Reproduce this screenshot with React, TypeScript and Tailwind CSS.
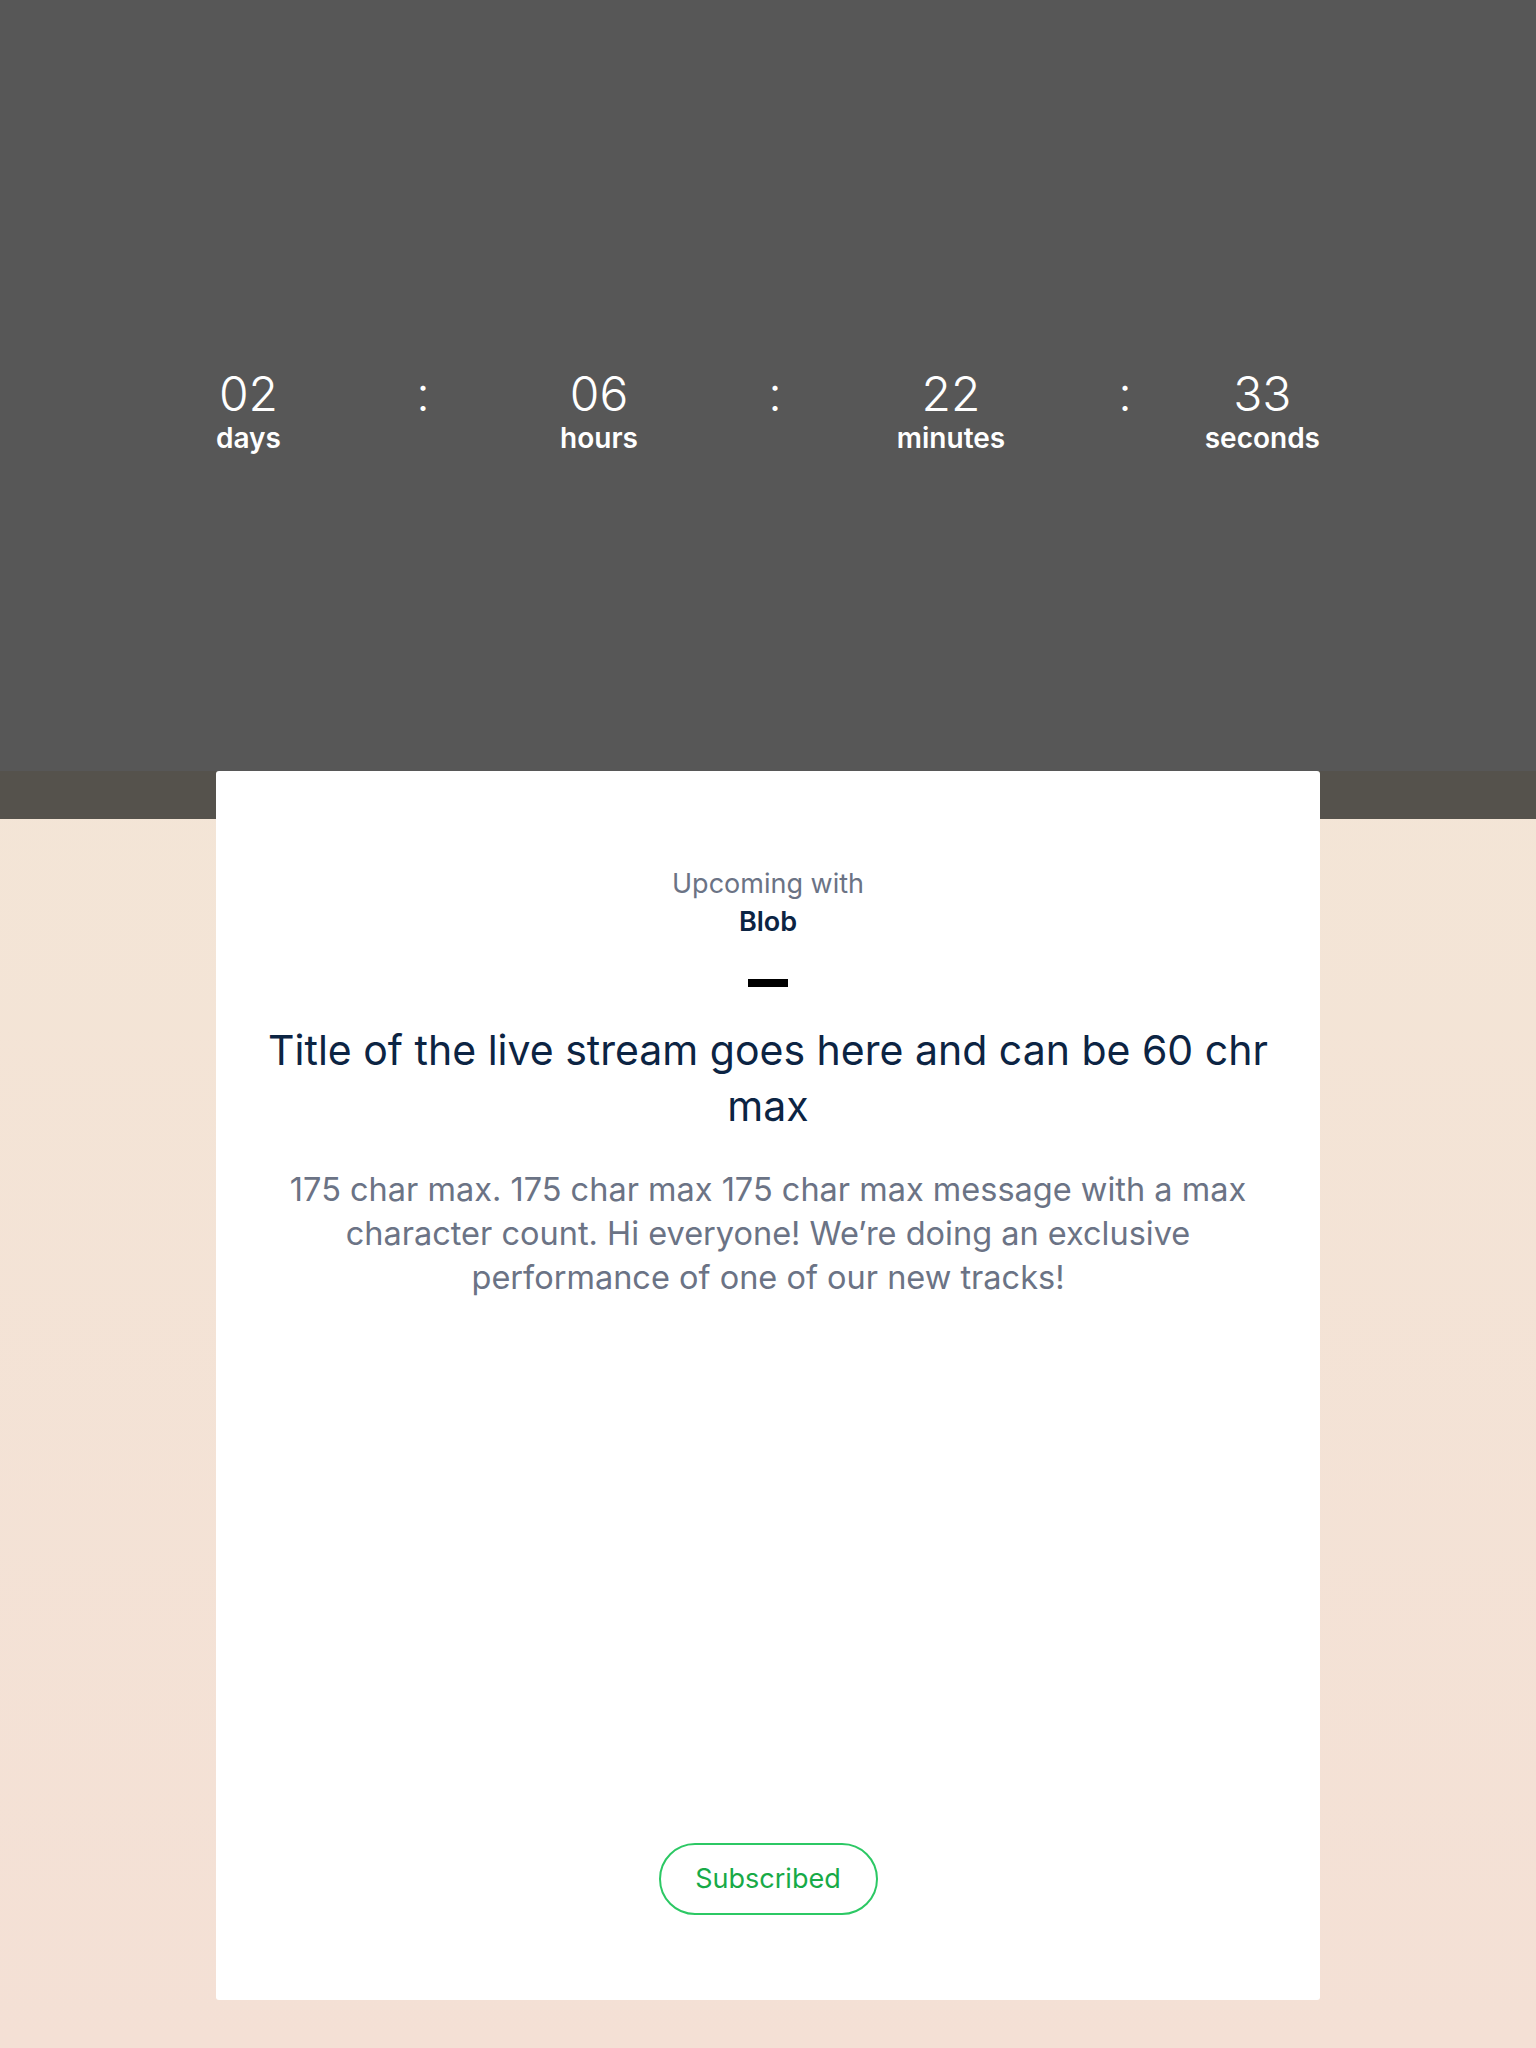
import React from "react";

const font = { fontFamily: "Inter, 'Noto Sans', sans-serif" };

function Unit({ value, label }: { value: string; label: string }) {
  return (
    <div className="flex flex-col items-center text-white">
      <div className="text-[48px] leading-[56px] font-light">{value}</div>
      <div className="text-[28px] leading-[32px] font-semibold">{label}</div>
    </div>
  );
}

function Colon() {
  return <div className="w-[20px] text-center text-[48px] leading-[56px] font-light text-white">:</div>;
}

export default function App() {
  return (
    <div style={font} className="w-full min-h-[2048px] bg-[linear-gradient(180deg,#f3e8d7_0%,#f4e0d5_100%)]">
      <div className="h-[771px] bg-[#575757] pt-[366px]">
        <div className="w-[1104px] mx-auto flex items-start">
          <div className="w-[64px] flex justify-start">
            <Unit value="02" label="days" />
          </div>
          <div className="ml-[133px]">
            <Colon />
          </div>
          <div className="ml-[106px] w-[120px] flex justify-center">
            <Unit value="06" label="hours" />
          </div>
          <div className="ml-[106px]">
            <Colon />
          </div>
          <div className="ml-[106px] w-[120px] flex justify-center">
            <Unit value="22" label="minutes" />
          </div>
          <div className="ml-[104px]">
            <Colon />
          </div>
          <div className="flex-1 flex justify-end">
            <Unit value="33" label="seconds" />
          </div>
        </div>
      </div>
      <div className="h-[48px] bg-[#55524c]" />
      <div className="pb-[48px]">
        <div className="relative -mt-[48px] mx-auto w-[1104px] h-[1229px] bg-white rounded-[3px] flex flex-col items-center pt-[94px] pb-[85px]">
          <div className="text-[27px] leading-[38px] text-[#6b7385]">Upcoming with</div>
          <div className="text-[27px] leading-[38px] font-semibold text-[#0c2443]">Blob</div>
          <div className="mt-[38px] w-[40px] h-[8px] bg-black" />
          <h1 className="mt-[35px] text-[41px] leading-[56px] text-[#0c2443] text-center">
            Title of the live stream goes here and can be 60 chr
            <br />
            max
          </h1>
          <p className="mt-[34px] text-[32.5px] leading-[44px] text-[#6b7385] text-center">
            175 char max. 175 char max 175 char max message with a max
            <br />
            character count. Hi everyone! We’re doing an exclusive
            <br />
            performance of one of our new tracks!
          </p>
          <button className="mt-auto w-[219px] h-[72px] rounded-full border-2 border-[#2cc864] text-[#17aa47] text-[27px]">
            Subscribed
          </button>
        </div>
      </div>
    </div>
  );
}
